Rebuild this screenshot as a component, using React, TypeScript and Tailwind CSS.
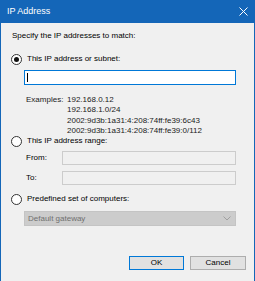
import React from "react";

function Radio({ checked }: { checked?: boolean }) {
  return (
    <div className="w-[11px] h-[11px] rounded-full border border-[#333333] bg-white flex items-center justify-center shrink-0">
      {checked && <div className="w-[5px] h-[5px] rounded-full bg-[#111111]" />}
    </div>
  );
}

export default function App() {
  return (
    <div className="w-[255px] h-[281px] bg-[#f0f0f0] border-x border-[#1466b8] flex flex-col text-black font-[family-name:'Liberation_Sans',Arial,sans-serif] text-[8px] overflow-hidden">
      <div className="h-[23px] bg-[#1466b8] flex items-center justify-between pl-[6px] pr-[6px] text-white text-[9px] shrink-0">
        <span>IP Address</span>
        <svg width="9" height="9" viewBox="0 0 9 9">
          <path d="M0.5 0.5L8.5 8.5M8.5 0.5L0.5 8.5" stroke="white" strokeWidth="1" />
        </svg>
      </div>
      <div className="flex flex-col pl-[10px]">
        <div className="mt-[8px] ml-[1px] leading-[10px]">Specify the IP addresses to match:</div>

        <div className="mt-[13px] flex items-center h-[10px]">
          <Radio checked />
          <span className="ml-[5px] leading-[10px]">This IP address or subnet:</span>
        </div>

        <div className="mt-[6px] ml-[13px] w-[212px] h-[15px] border border-[#0078d7] bg-white flex items-center">
          <div className="ml-[2px] w-px h-[9px] bg-black" />
        </div>

        <div className="mt-[10px] ml-[15px] flex leading-[10.3px]">
          <div className="w-[41px] shrink-0 text-[#222222]">Examples:</div>
          <div className="flex flex-col text-[#222222] whitespace-nowrap">
            <span>192.168.0.12</span>
            <span>192.168.1.0/24</span>
            <span>2002:9d3b:1a31:4:208:74ff:fe39:6c43</span>
            <span>2002:9d3b:1a31:4:208:74ff:fe39:0/112</span>
          </div>
        </div>

        <div className="mt-[0px] flex items-center h-[10px]">
          <Radio />
          <span className="ml-[5px] leading-[10px]">This IP address range:</span>
        </div>

        <div className="mt-[5px] ml-[15px] flex items-center">
          <span className="w-[36px] shrink-0 leading-[10px]">From:</span>
          <div className="w-[174px] h-[14px] border border-[#cccccc] bg-[#f0f0f0]" />
        </div>
        <div className="mt-[6px] ml-[15px] flex items-center">
          <span className="w-[36px] shrink-0 leading-[10px]">To:</span>
          <div className="w-[174px] h-[14px] border border-[#cccccc] bg-[#f0f0f0]" />
        </div>

        <div className="mt-[9px] flex items-center h-[10px]">
          <Radio />
          <span className="ml-[5px] leading-[10px]">Predefined set of computers:</span>
        </div>

        <div className="mt-[7px] ml-[13px] w-[212px] h-[15px] bg-[#cccccc] border border-[#c4c4c4] flex items-center justify-between pl-[3px] pr-[4px]">
          <span className="text-[#707070] leading-[10px]">Default gateway</span>
          <svg width="8" height="5" viewBox="0 0 8 5">
            <path d="M0.5 0.5L4 4L7.5 0.5" stroke="#a0a0a0" strokeWidth="1" fill="none" />
          </svg>
        </div>

        <div className="mt-[30px] flex justify-end pr-[8px] gap-[6px]">
          <div className="w-[55px] h-[14px] bg-[#e1e1e1] border border-[#0078d7] flex items-center justify-center leading-[10px]">OK</div>
          <div className="w-[56px] h-[14px] bg-[#e1e1e1] border border-[#adadad] flex items-center justify-center leading-[10px]">Cancel</div>
        </div>
      </div>
    </div>
  );
}
